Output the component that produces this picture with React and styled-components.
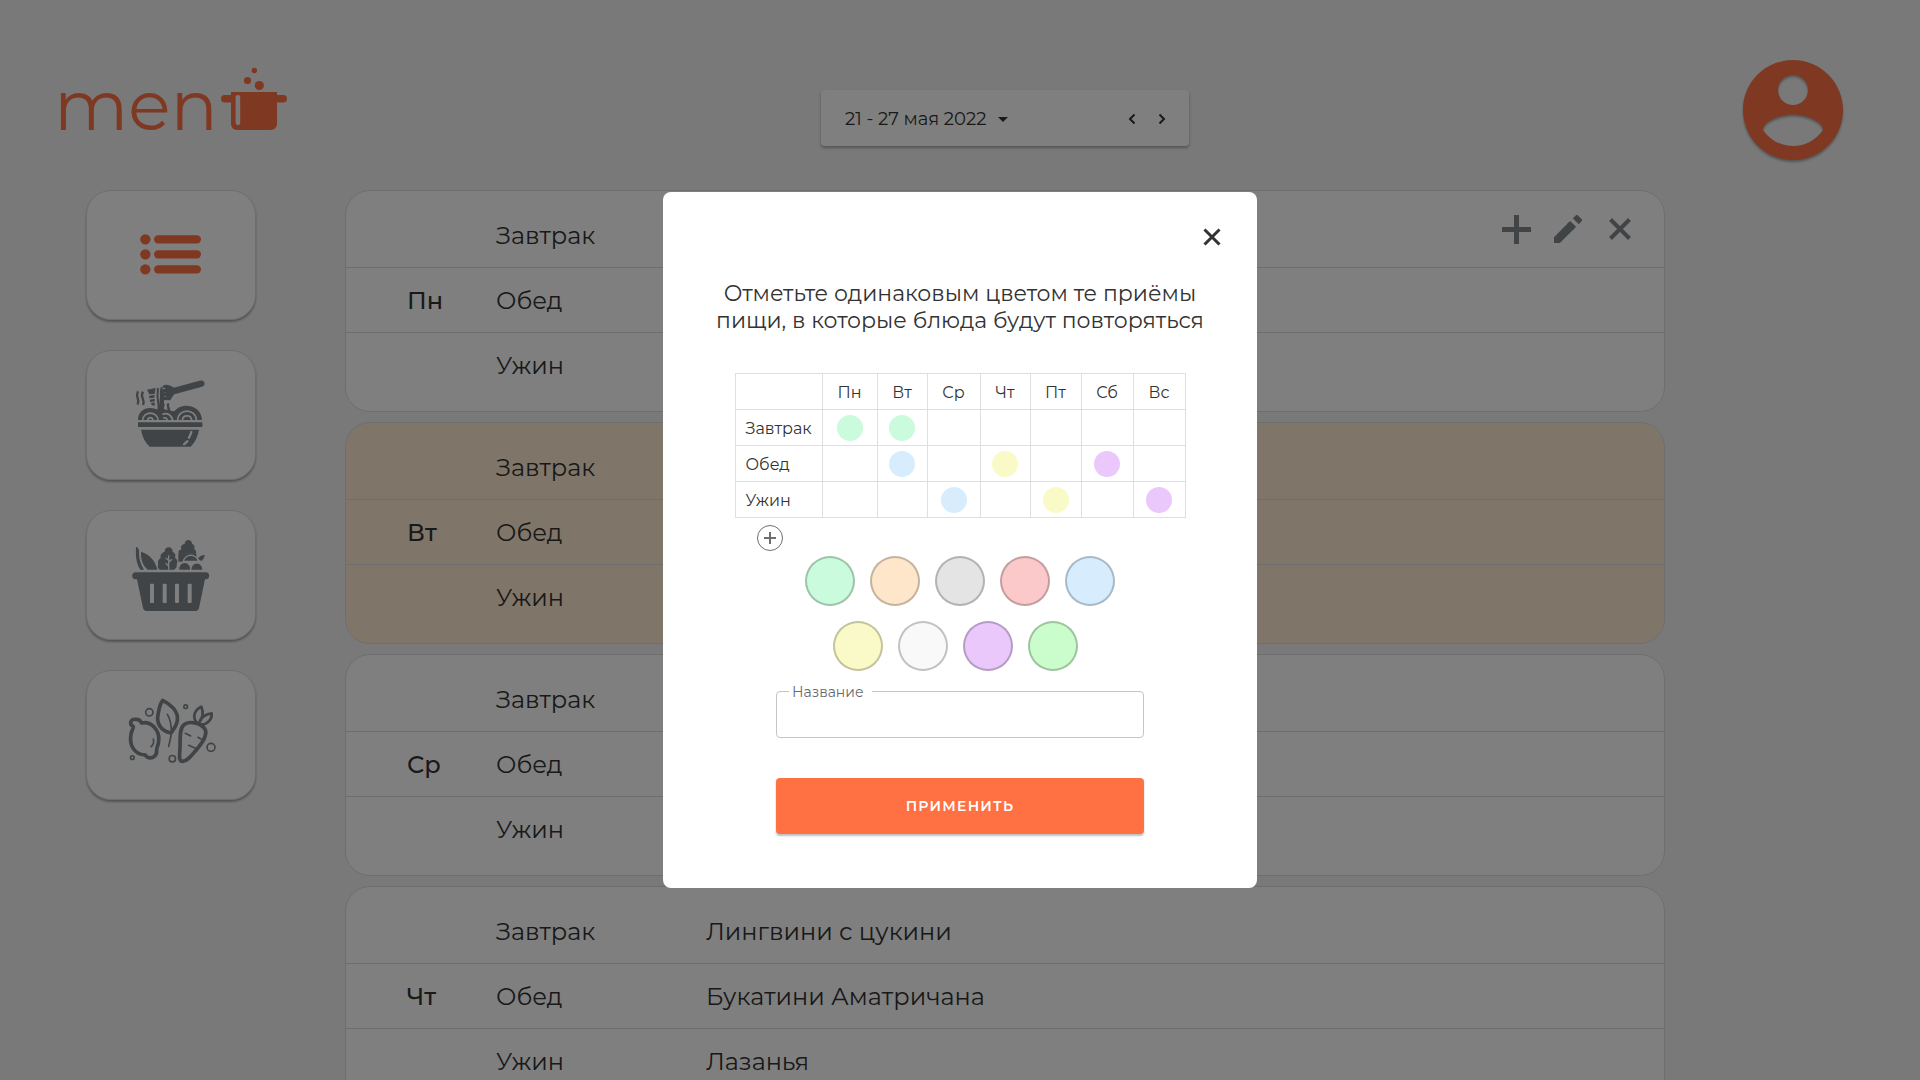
import React, { useState } from "react";
import styled, { createGlobalStyle } from "styled-components";

const GlobalStyle = createGlobalStyle`
  *, *::before, *::after { box-sizing: border-box; }
  body {
    margin: 0;
    background: #f2f2f2;
    color: #333333;
    font-family: Montserrat, Inter, "Noto Sans", sans-serif;
  }
  button, input { font: inherit; color: inherit; }
`;

const Page = styled.div`
  display: grid;
  grid-template-columns: 345px minmax(0, 1fr) 255px;
  grid-template-rows: 190px auto;
  height: 100vh;
  overflow: hidden;
`;

const Logo = styled.a`
  display: flex;
  align-items: flex-start;
  gap: 2px;
  padding: 59px 0 0 54px;
  color: #ff7043;
  font-family: Montserrat, "Open Sans", sans-serif;
  font-size: 70px;
  font-weight: 400;
  line-height: 92px;
  text-decoration: none;

  svg { margin-top: 5px; }
`;

const PeriodBar = styled.div`
  display: flex;
  align-items: center;
  align-self: start;
  justify-self: center;
  width: 368px;
  height: 56px;
  margin-top: 90px;
  padding: 2px 12px 0 24px;
  background: #ffffff;
  border-radius: 4px;
  box-shadow: 0 2px 3px rgba(0, 0, 0, 0.3);
`;

const IconButton = styled.button`
  display: flex;
  align-items: center;
  justify-content: center;
  width: ${(p) => p.$size}px;
  height: ${(p) => p.$size}px;
  padding: 0;
  border: 0;
  background: none;
  color: ${(p) => p.$color || "#333333"};
  cursor: pointer;
`;

const PeriodButton = styled.button`
  display: flex;
  align-items: center;
  gap: 12px;
  margin-right: auto;
  padding: 0;
  border: 0;
  background: none;
  font-size: 18px;
  font-weight: 400;
`;

const Account = styled.button`
  align-self: start;
  justify-self: center;
  width: 100px;
  height: 100px;
  margin-top: 60px;
  padding: 0;
  border: 0;
  background: none;
  color: #ff7043;

  svg {
    display: block;
    overflow: visible;
    filter: drop-shadow(0 2px 1px rgba(0, 0, 0, 0.3));
  }
`;

const Sidebar = styled.nav`
  display: flex;
  flex-direction: column;
  align-items: flex-start;
  gap: 30px;
  padding-left: 86px;
`;

const NavCard = styled.a`
  display: flex;
  align-items: center;
  justify-content: center;
  width: 170px;
  height: 130px;
  border: 1px solid #dddddd;
  border-radius: 25px;
  background: #ffffff;
  box-shadow: 0 2px 2px rgba(0, 0, 0, 0.3);
  color: ${(p) => (p.$active ? "#ff7043" : "#80888c")};
`;

const Week = styled.main`
  display: flex;
  flex-direction: column;
  gap: 10px;
`;

const DayCard = styled.section`
  display: grid;
  grid-template-columns: minmax(0, 1fr);
  flex: none;
  position: relative;
  padding: 12px 0 13px;
  border: 1px solid #dddddd;
  border-radius: 25px;
  background: ${(p) => (p.$today ? "#ffecd3" : "#ffffff")};
`;

const MealRow = styled.div`
  display: grid;
  grid-template-columns: 89px 210px 1fr;
  align-items: center;
  height: 65px;
  padding-left: 61px;
  border-bottom: ${(p) => (p.$last ? 0 : 1)}px solid #dddddd;
  font-size: 24px;
  font-weight: 400;
`;

const DayName = styled.span`
  font-weight: 500;
`;

const DayActions = styled.div`
  position: absolute;
  top: 17px;
  right: 23px;
  display: flex;
  gap: 10px;
`;

const Overlay = styled.div`
  position: fixed;
  inset: 0;
  display: flex;
  align-items: center;
  justify-content: center;
  background: rgba(0, 0, 0, 0.5);
`;

const Dialog = styled.form`
  display: flex;
  flex-direction: column;
  align-items: center;
  width: 594px;
  padding: 28px 28px 54px;
  border-radius: 8px;
  background: #ffffff;
`;

const DialogHead = styled.div`
  display: flex;
  justify-content: flex-end;
  width: 100%;
`;

const Title = styled.h1`
  margin: 26px 0 39px;
  font-size: 22px;
  font-weight: 400;
  line-height: 27px;
  text-align: center;
  white-space: nowrap;
`;

const Plan = styled.table`
  border-collapse: collapse;
  table-layout: fixed;
  width: 451px;
  font-size: 16px;

  th, td {
    height: 36px;
    padding: 0;
    border: 1px solid #dfdfdf;
    font-weight: 400;
    line-height: 20px;
  }

  th { padding-top: 2px; }

  tbody th {
    padding-left: 10px;
    text-align: left;
  }
`;

const Column = styled.col`
  width: ${(p) => p.$width}px;
`;

const Dot = styled.span`
  display: block;
  width: 26px;
  height: 26px;
  margin: 0 auto;
  border-radius: 50%;
  background: ${(p) => p.$color};
`;

const AddRow = styled.div`
  width: 451px;
  padding: 7px 0 5px 22px;
`;

const AddButton = styled(IconButton)`
  border: 1px solid #6e6e6e;
  border-radius: 50%;
`;

const Palette = styled.div`
  display: flex;
  flex-direction: column;
  align-items: center;
  gap: 15px;
`;

const SwatchRow = styled.div`
  display: flex;
  gap: 15px;
  padding-right: ${(p) => (p.$short ? 9 : 0)}px;
`;

const Swatch = styled.input`
  appearance: none;
  width: 50px;
  height: 50px;
  margin: 0;
  border: 2px solid rgba(0, 0, 0, 0.22);
  border-radius: 50%;
  background: ${(p) => p.$color};
  cursor: pointer;
`;

const Field = styled.div`
  position: relative;
  width: 368px;
  margin: 20px 0 40px;

  label {
    position: absolute;
    top: -8px;
    left: 13px;
    padding: 0 8px 0 3px;
    background: #ffffff;
    color: #666b6e;
    font-size: 14px;
    line-height: 18px;
  }

  input {
    display: block;
    width: 100%;
    height: 47px;
    padding: 0 16px;
    border: 1px solid #c4c4c4;
    border-radius: 4px;
    background: none;
    outline: none;
  }
`;

const Submit = styled.button`
  width: 368px;
  height: 56px;
  border: 0;
  border-radius: 4px;
  background: #ff7043;
  box-shadow: 0 2px 2px rgba(0, 0, 0, 0.25);
  color: #ffffff;
  font-size: 14px;
  font-weight: 600;
  letter-spacing: 1.25px;
  text-transform: uppercase;
`;

const PotIcon = () => (
  <svg width="68" height="68" viewBox="220 64 68 68" fill="currentColor" aria-hidden="true">
    <circle cx="254.3" cy="70.5" r="2.7" />
    <circle cx="247.5" cy="80.5" r="3.6" />
    <circle cx="259.3" cy="85.5" r="4.6" />
    <rect x="221" y="95" width="66" height="7.4" rx="3.7" />
    <path d="M231 92h46v32a6 6 0 0 1-6 6h-34a6 6 0 0 1-6-6z" />
    <rect x="235.6" y="95" width="4.6" height="30" rx="2" fill="#f2f2f2" />
  </svg>
);

const AccountIcon = () => (
  <svg width="100" height="100" viewBox="2 2 20 20" fill="currentColor" aria-hidden="true">
    <path d="M12 2C6.48 2 2 6.48 2 12s4.48 10 10 10 10-4.48 10-10S17.52 2 12 2zm0 3c1.66 0 3 1.34 3 3s-1.34 3-3 3-3-1.34-3-3 1.34-3 3-3zm0 14.2c-2.5 0-4.71-1.28-6-3.22.03-1.99 4-3.08 6-3.08 1.99 0 5.97 1.09 6 3.08-1.29 1.94-3.5 3.22-6 3.22z" />
  </svg>
);

const ListIcon = () => (
  <svg width="90" height="80" viewBox="168 135 270 240" fill="currentColor" aria-hidden="true">
    {[208, 253, 298].map((y) => (
      <g key={y}>
        <circle cx="226" cy={y} r="15.5" />
        <rect x="252" y={y - 12.5} width="141" height="25" rx="12.5" />
      </g>
    ))}
  </svg>
);

const NoodlesIcon = () => (
  <svg width="90" height="80" viewBox="168 615 270 240" fill="none" stroke="currentColor" aria-hidden="true">
    <path d="M213 779h174c-3 20-12 38-25 51H239c-14-13-23-31-26-51z" fill="currentColor" stroke="none" />
    <path d="M204 757h193v14H204z" fill="currentColor" stroke="none" />
    <path d="M204 750c0-24 17-36 36-36 12 0 20 4 26 7l6-60 12-2-3 58c4 2 7 1 12 3l-3-18 6-1 4 21 13 2c7-10 20-17 36-17 25 0 46 16 47 43z" fill="currentColor" stroke="none" />
    <g stroke="#ffffff" strokeWidth="5">
      <path d="M218 751c1-29 45-29 46 0M233 751c1-11 15-11 16 0" />
      <path d="M277 733c14-6 28 2 31 18M279 744c6-2 11 0 13 7" />
      <path d="M323 751c1-37 55-37 56 0M337 751c1-18 27-18 28 0" />
      <path d="M364 786q-3 10-7 17M352 814l-10 9" strokeWidth="7" strokeLinecap="round" />
    </g>
    <path d="M204 664q-5 10-1 20t0 20M219 665q-6 10-1 20t1 20" strokeWidth="7" />
    <path d="M231 659l26-5-3 18-16 1zM237 677l17-2-1 8-15 2zM239 689l15-3v8l-13 3zM242 700l12-3v11q-7 1-12-8z" fill="currentColor" stroke="none" />
    <path d="M264 654q-3 22 0 38t1 30M275 652q-5 22 0 38t-2 32" strokeWidth="6" />
    <path d="M282 701q-6 12-1 25M295 700q-3 14 5 24" strokeWidth="6" />
    <path d="M305 665l89-24" strokeWidth="19" strokeLinecap="round" />
    <path d="M285 645c13-3 22 6 27 9v21c-7 4-6 11-12 16l-21-1-1-7 13-4-15-1-1-7 14-4-15-1v-7l15-4-12-2c1-5 3-7 8-8z" fill="currentColor" stroke="none" />
  </svg>
);

const BasketIcon = () => (
  <svg width="90" height="80" viewBox="168 135 270 240" fill="currentColor" aria-hidden="true">
    <path d="M197 247h210a10 10 0 0 1 0 21h-2l-18 86q-2 9-11 9H230q-9 0-11-9l-18-86h-4a10 10 0 0 1 0-21z" />
    {[240, 278, 315, 353].map((x) => (
      <rect key={x} x={x} y="281" width="12" height="58" rx="3" fill="#ffffff" />
    ))}
    <path d="M198 170c9 5 10 9 9 20 0 18 6 36 15 49h-11c-14-22-14-44-13-69z" />
    <path d="M213 185c27 8 42 27 49 54h-29c-15-13-21-31-20-54z" />
    <path d="M296 172a12 12 0 0 1 12 13c8 4 10 10 7 18 8 5 9 13 5 19 2 8-2 15-8 17h-43c-6-3-7-10-4-16-3-8 0-14 7-18-2-9 1-16 12-20a12 12 0 0 1 12-13z" />
    <path d="M296 196v43M296 211l-9-7M296 217l10-9M296 228l-9-8" fill="none" stroke="#ffffff" strokeWidth="4" />
    <path d="M355 150a11 11 0 0 1 11 12c7 2 10 9 6 15 6 3 8 8 6 14h-51c-4-6-1-11 8-13-5-7-1-14 9-16a11 11 0 0 1 11-12z" />
    <path d="M325 190h54v25h-54z" />
    <g stroke="#ffffff" strokeWidth="4">
      <path d="M340 214a23 23 0 0 1 45 0z" />
      <path d="M327 241a18 18 0 1 1 34 0z" />
      <path d="M363 241a18 18 0 1 1 35 0z" />
    </g>
    <path d="M384 206q5-10 21-11-5 15-11 18z" />
    <path d="M320 240h84v5h-84z" fill="#ffffff" />
  </svg>
);

const ProduceIcon = () => (
  <svg width="90" height="80" viewBox="168 615 270 240" fill="none" stroke="currentColor" strokeWidth="11" strokeLinejoin="round" strokeLinecap="round" aria-hidden="true">
    <path d="M190 710c-15-9-7-24 8-22 13-1 15 9 17 11 29-7 55 24 51 53 0 14-7 19-6 29 1 16-11 25-24 22-7-1-7-6-11-8-34-2-48-32-42-62 1-12 8-17 7-23z" />
    <path d="M278 631c21 10 49 32 44 61-3 17-12 27-19 37-31-7-46-30-38-59 2-14 6-29 13-39z" />
    <path d="M292 673c9 14 12 34 12 50s-5 32-8 46" strokeWidth="5" />
    <path d="M340 706c16-15 52-9 66 13 7 17-8 38-24 57-17 19-27 36-44 38-13 0-9-18-8-42 1-25-2-54 10-66z" />
    <path d="M346 730l16 8M384 742l9 5M356 766l20 9M250 747q4 14-7 23" strokeWidth="5" />
    <path d="M382 700c-16-17-10-40 12-50 8 18 3 36-8 50M386 702c5-18 20-30 39-32 2 17-11 32-32 36" strokeWidth="8" />
    <path d="M374 695q10-1 16 3l14 2-8 14z" fill="currentColor" stroke="none" />
    <g strokeWidth="5">
      <circle cx="238" cy="667" r="11" />
      <circle cx="347" cy="650" r="5.5" />
      <circle cx="423" cy="772" r="12" />
      <circle cx="307" cy="806" r="9.5" />
      <circle cx="187" cy="803" r="5.5" />
    </g>
  </svg>
);

const PlusIcon = ({ size, stroke }) => (
  <svg width={size} height={size} viewBox={`0 0 ${size} ${size}`} stroke="currentColor" strokeWidth={stroke} aria-hidden="true">
    <path d={`M${size / 2} 0V${size}M0 ${size / 2}H${size}`} />
  </svg>
);

const PencilIcon = () => (
  <svg width="28" height="28" viewBox="3 3 18 18" fill="currentColor" aria-hidden="true">
    <path d="M3 17.25V21h3.75L16.3 11.450l-3.750-3.750L3 17.25zM20.71 7.04a1 1 0 0 0 0-1.41l-2.34-2.34a1 1 0 0 0-1.41 0l-1.83 1.83 3.75 3.75 1.83-1.83z" />
    <path d="M13.400 6.850l3.750 3.750-2 2-3.750-3.750z" />
  </svg>
);

const CrossIcon = ({ size, stroke }) => (
  <svg width={size} height={size} viewBox={`0 0 ${size} ${size}`} stroke="currentColor" strokeWidth={stroke} aria-hidden="true">
    <path d={`M1.5 1.5L${size - 1.5} ${size - 1.5}M${size - 1.5} 1.5L1.5 ${size - 1.5}`} />
  </svg>
);

const Chevron = ({ next }) => (
  <svg width="8" height="12" viewBox="0 0 8 12" fill="none" stroke="currentColor" strokeWidth="2" aria-hidden="true">
    <path d={next ? "M1.5 1.5L6 6l-4.5 4.5" : "M6.5 1.5L2 6l4.5 4.5"} />
  </svg>
);

const navItems = [
  { label: "Меню", icon: ListIcon, active: true },
  { label: "Блюда", icon: NoodlesIcon },
  { label: "Покупки", icon: BasketIcon },
  { label: "Продукты", icon: ProduceIcon },
];

const meals = ["Завтрак", "Обед", "Ужин"];

const days = [
  { name: "Пн", dishes: [], actions: true },
  { name: "Вт", dishes: [], today: true },
  { name: "Ср", dishes: [] },
  { name: "Чт", dishes: ["Лингвини с цукини", "Букатини Аматричана", "Лазанья"] },
];

const columns = [
  { name: "Пн", width: 55 },
  { name: "Вт", width: 50 },
  { name: "Ср", width: 53 },
  { name: "Чт", width: 50 },
  { name: "Пт", width: 51 },
  { name: "Сб", width: 52 },
  { name: "Вс", width: 52 },
];

const mint = "#c9fbdc";
const sky = "#d7edfe";
const lemon = "#fafac8";
const lilac = "#eac8fb";

const plan = [
  { meal: "Завтрак", marks: { Пн: mint, Вт: mint } },
  { meal: "Обед", marks: { Вт: sky, Чт: lemon, Сб: lilac } },
  { meal: "Ужин", marks: { Ср: sky, Пт: lemon, Вс: lilac } },
];

const palette = [
  [
    { label: "Мятный", color: mint },
    { label: "Персиковый", color: "#fde6ca" },
    { label: "Серый", color: "#e4e4e4" },
    { label: "Розовый", color: "#fcc9cb" },
    { label: "Голубой", color: sky },
  ],
  [
    { label: "Жёлтый", color: lemon },
    { label: "Белый", color: "#f9f9f9" },
    { label: "Сиреневый", color: lilac },
    { label: "Зелёный", color: "#cbfccb" },
  ],
];

export default function App() {
  const [title, setTitle] = useState("");

  return (
    <>
      <GlobalStyle />
      <Page>
        <Logo href="#" aria-label="menu">
          men
          <PotIcon />
        </Logo>
        <PeriodBar>
          <PeriodButton type="button">
            21 - 27 мая 2022
            <svg width="10" height="5" viewBox="0 0 10 5" fill="currentColor" aria-hidden="true">
              <path d="M0 0h10L5 5z" />
            </svg>
          </PeriodButton>
          <IconButton type="button" $size={30} aria-label="Предыдущая неделя">
            <Chevron />
          </IconButton>
          <IconButton type="button" $size={30} aria-label="Следующая неделя">
            <Chevron next />
          </IconButton>
        </PeriodBar>
        <Account type="button" aria-label="Профиль">
          <AccountIcon />
        </Account>

        <Sidebar>
          {navItems.map(({ label, icon: Icon, active }) => (
            <NavCard key={label} href="#" aria-label={label} $active={active}>
              <Icon />
            </NavCard>
          ))}
        </Sidebar>

        <Week>
          {days.map((day) => (
            <DayCard key={day.name} $today={day.today}>
              {meals.map((meal, i) => (
                <MealRow key={meal} $last={i === meals.length - 1}>
                  <DayName>{i === 1 ? day.name : ""}</DayName>
                  <span>{meal}</span>
                  <span>{day.dishes[i]}</span>
                </MealRow>
              ))}
              {day.actions && (
                <DayActions>
                  <IconButton type="button" $size={42} $color="#80888c" aria-label="Добавить">
                    <PlusIcon size={29} stroke={5} />
                  </IconButton>
                  <IconButton type="button" $size={42} $color="#80888c" aria-label="Изменить">
                    <PencilIcon />
                  </IconButton>
                  <IconButton type="button" $size={42} $color="#80888c" aria-label="Удалить">
                    <CrossIcon size={22} stroke={4} />
                  </IconButton>
                </DayActions>
              )}
            </DayCard>
          ))}
        </Week>
      </Page>

      <Overlay>
        <Dialog role="dialog" aria-modal="true" aria-labelledby="dialog-title" onSubmit={(e) => e.preventDefault()}>
          <DialogHead>
            <IconButton type="button" $size={34} aria-label="Закрыть">
              <CrossIcon size={18} stroke={3} />
            </IconButton>
          </DialogHead>
          <Title id="dialog-title">
            Отметьте одинаковым цветом те приёмы
            <br />
            пищи, в которые блюда будут повторяться
          </Title>
          <Plan>
            <colgroup>
              <Column $width={87} />
              {columns.map((c) => (
                <Column key={c.name} $width={c.width} />
              ))}
            </colgroup>
            <thead>
              <tr>
                <td />
                {columns.map((c) => (
                  <th key={c.name} scope="col">{c.name}</th>
                ))}
              </tr>
            </thead>
            <tbody>
              {plan.map((row) => (
                <tr key={row.meal}>
                  <th scope="row">{row.meal}</th>
                  {columns.map((c) => (
                    <td key={c.name}>{row.marks[c.name] && <Dot $color={row.marks[c.name]} />}</td>
                  ))}
                </tr>
              ))}
            </tbody>
          </Plan>
          <AddRow>
            <AddButton type="button" $size={26} $color="#6e6e6e" aria-label="Добавить приём пищи">
              <PlusIcon size={12} stroke={2} />
            </AddButton>
          </AddRow>
          <Palette role="radiogroup" aria-label="Цвет">
            {palette.map((row, i) => (
              <SwatchRow key={i} $short={i === 1}>
                {row.map((s) => (
                  <Swatch key={s.label} type="radio" name="color" aria-label={s.label} $color={s.color} />
                ))}
              </SwatchRow>
            ))}
          </Palette>
          <Field>
            <label htmlFor="plan-name">Название</label>
            <input id="plan-name" type="text" value={title} onChange={(e) => setTitle(e.target.value)} />
          </Field>
          <Submit type="submit">Применить</Submit>
        </Dialog>
      </Overlay>
    </>
  );
}
